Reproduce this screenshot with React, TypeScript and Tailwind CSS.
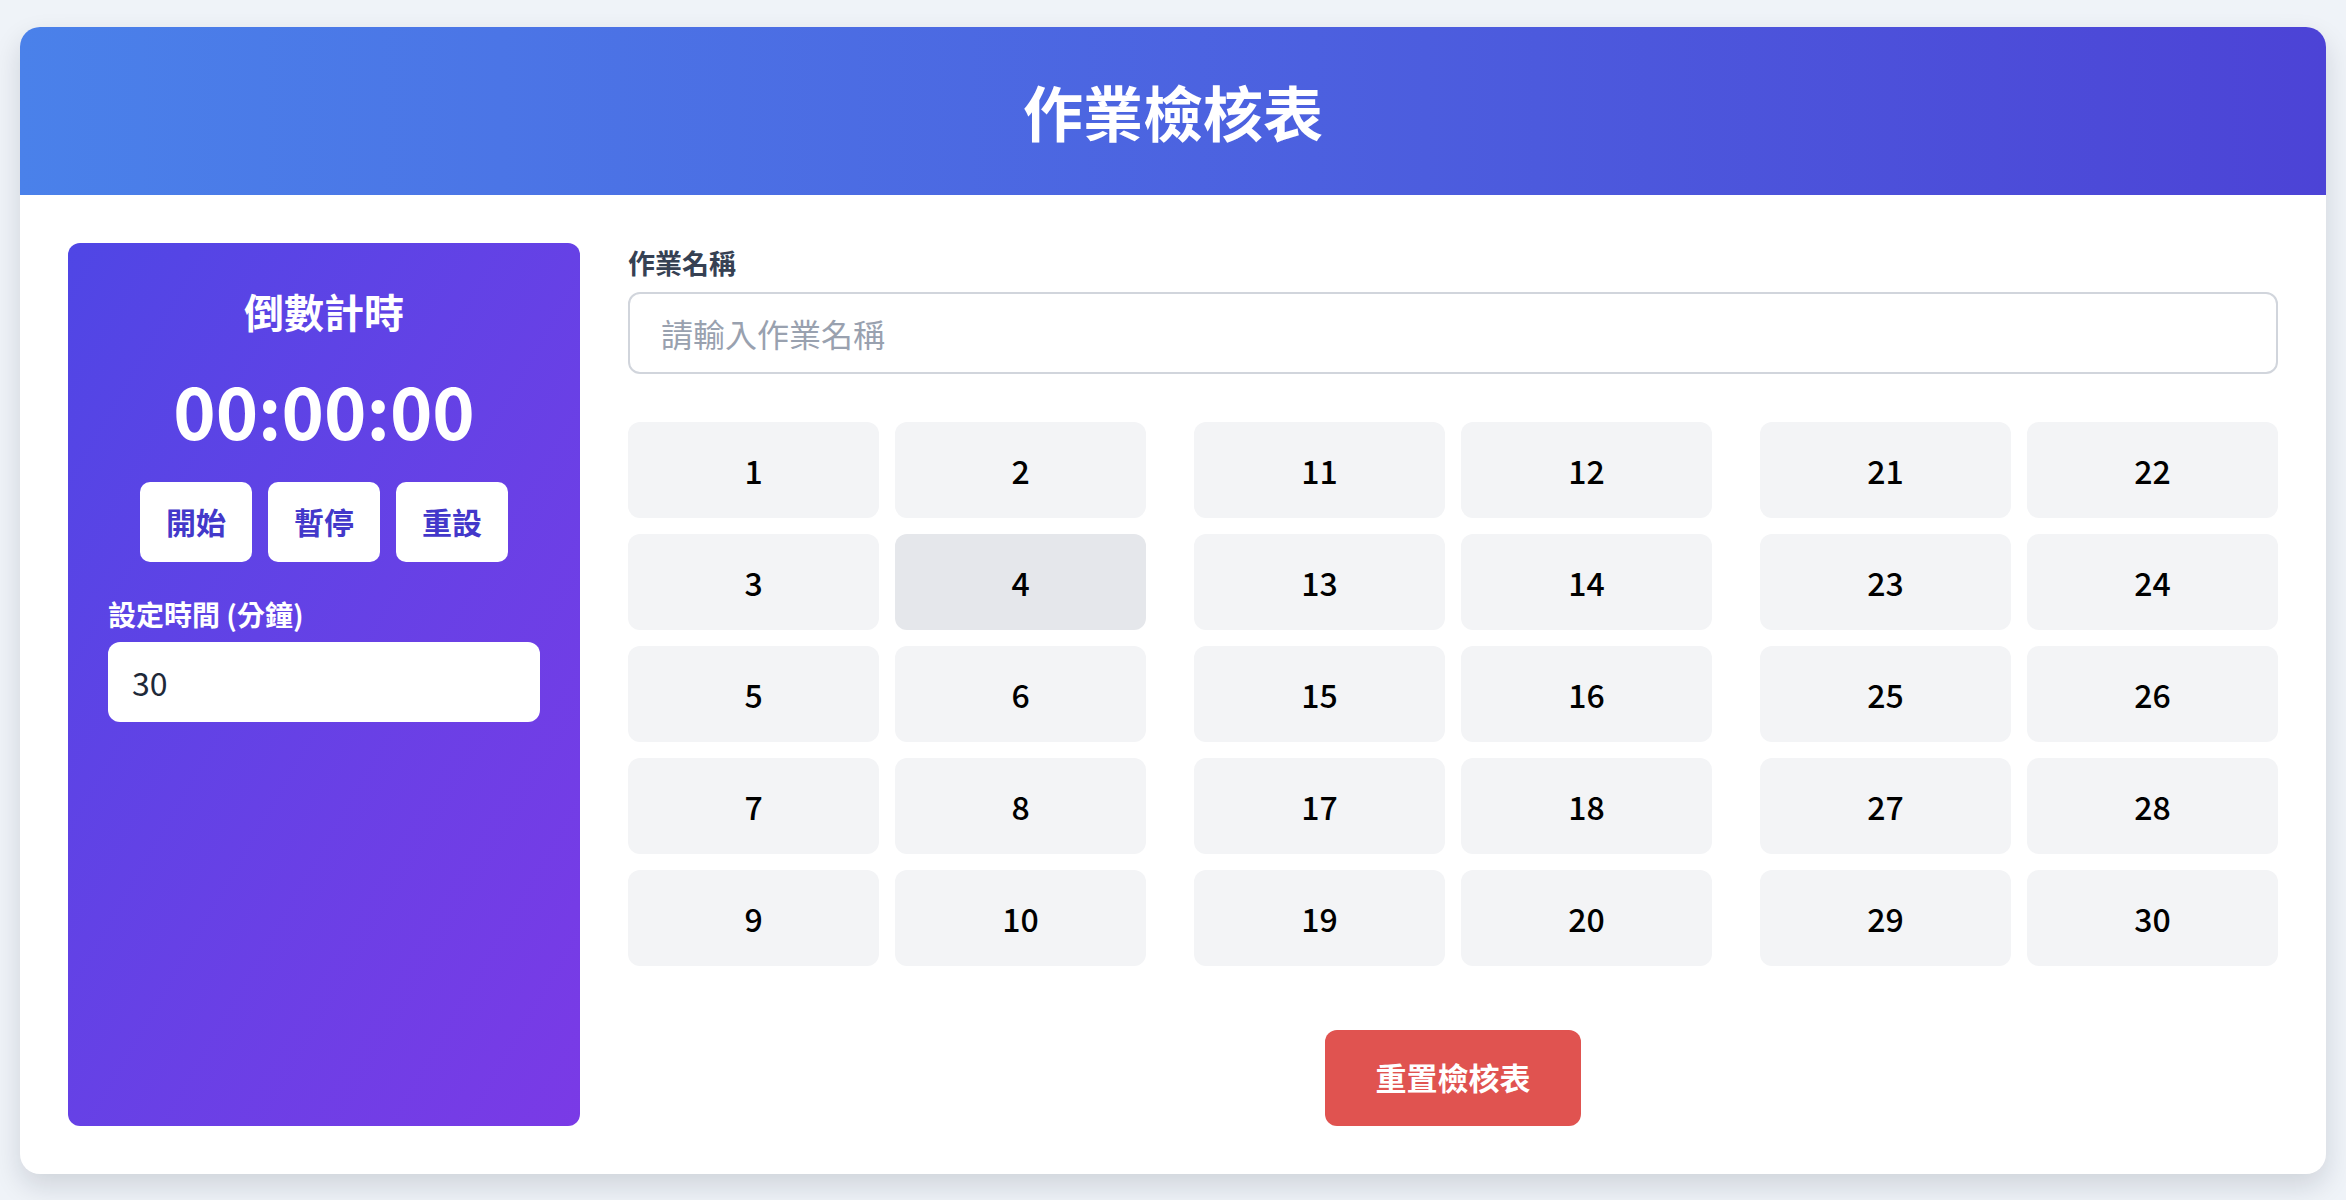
import React, { useState } from 'react';

const font = { fontFamily: '"Noto Sans CJK TC", "Noto Sans", sans-serif' };

const groups = [
  [1, 2, 3, 4, 5, 6, 7, 8, 9, 10],
  [11, 12, 13, 14, 15, 16, 17, 18, 19, 20],
  [21, 22, 23, 24, 25, 26, 27, 28, 29, 30],
];

export default function App() {
  const [checked, setChecked] = useState<number[]>([]);
  const [minutes, setMinutes] = useState('30');

  const toggle = (n: number) =>
    setChecked((c) => (c.includes(n) ? c.filter((x) => x !== n) : [...c, n]));

  return (
    <div className="min-h-screen flex items-center px-5 bg-[#eff3f8]" style={font}>
      <div className="w-full bg-white rounded-[20px] overflow-hidden shadow-[0_12px_28px_rgba(15,23,42,0.14)]">
        {/* header */}
        <div className="h-[168px] flex items-center justify-center bg-gradient-to-r from-[#4a81ea] to-[#4c43d6]">
          <h1 className="text-white text-[60px] leading-none font-bold">作業檢核表</h1>
        </div>

        <div className="flex gap-12 p-12">
          {/* countdown panel */}
          <div className="w-[512px] shrink-0 rounded-xl bg-gradient-to-br from-[#4f46e5] to-[#7a3ae6] px-10 pt-[38px] flex flex-col items-center">
            <h2 className="text-white text-[40px] leading-[60px] font-bold">倒數計時</h2>
            <div className="mt-[20px] text-white text-[72px] leading-[96px] font-bold">00:00:00</div>
            <div className="mt-[25px] flex gap-4">
              {['開始', '暫停', '重設'].map((t) => (
                <button
                  key={t}
                  className="w-[112px] h-[80px] rounded-[10px] bg-white text-[#4338ca] text-[30px] font-bold"
                >
                  {t}
                </button>
              ))}
            </div>
            <label className="self-stretch mt-[32px] text-white text-[28px] leading-[40px] font-bold">
              設定時間 (分鐘)
            </label>
            <input
              value={minutes}
              onChange={(e) => setMinutes(e.target.value)}
              className="self-stretch mt-2 h-[80px] rounded-xl bg-white px-6 text-[32px] text-gray-800 outline-none"
            />
          </div>

          {/* checklist */}
          <div className="flex-1 flex flex-col">
            <label className="text-[27px] leading-[40px] font-bold text-gray-700">作業名稱</label>
            <input
              placeholder="請輸入作業名稱"
              className="mt-[9px] h-[82px] rounded-xl border-2 border-gray-300 px-[31px] text-[32px] text-gray-800 placeholder:text-gray-400 outline-none"
            />
            <div className="mt-12 grid grid-cols-3 gap-12">
              {groups.map((g, i) => (
                <div key={i} className="grid grid-cols-2 gap-4">
                  {g.map((n) => (
                    <button
                      key={n}
                      onClick={() => toggle(n)}
                      className={`h-[96px] rounded-xl text-[32px] font-medium text-black ${
                        n === 4 || checked.includes(n) ? 'bg-gray-200' : 'bg-gray-100'
                      }`}
                    >
                      {n}
                    </button>
                  ))}
                </div>
              ))}
            </div>
            <div className="mt-16 flex justify-center">
              <button
                onClick={() => setChecked([])}
                className="w-[256px] h-[96px] rounded-xl bg-[#e05350] text-white text-[31px] font-bold"
              >
                重置檢核表
              </button>
            </div>
          </div>
        </div>
      </div>
    </div>
  );
}
